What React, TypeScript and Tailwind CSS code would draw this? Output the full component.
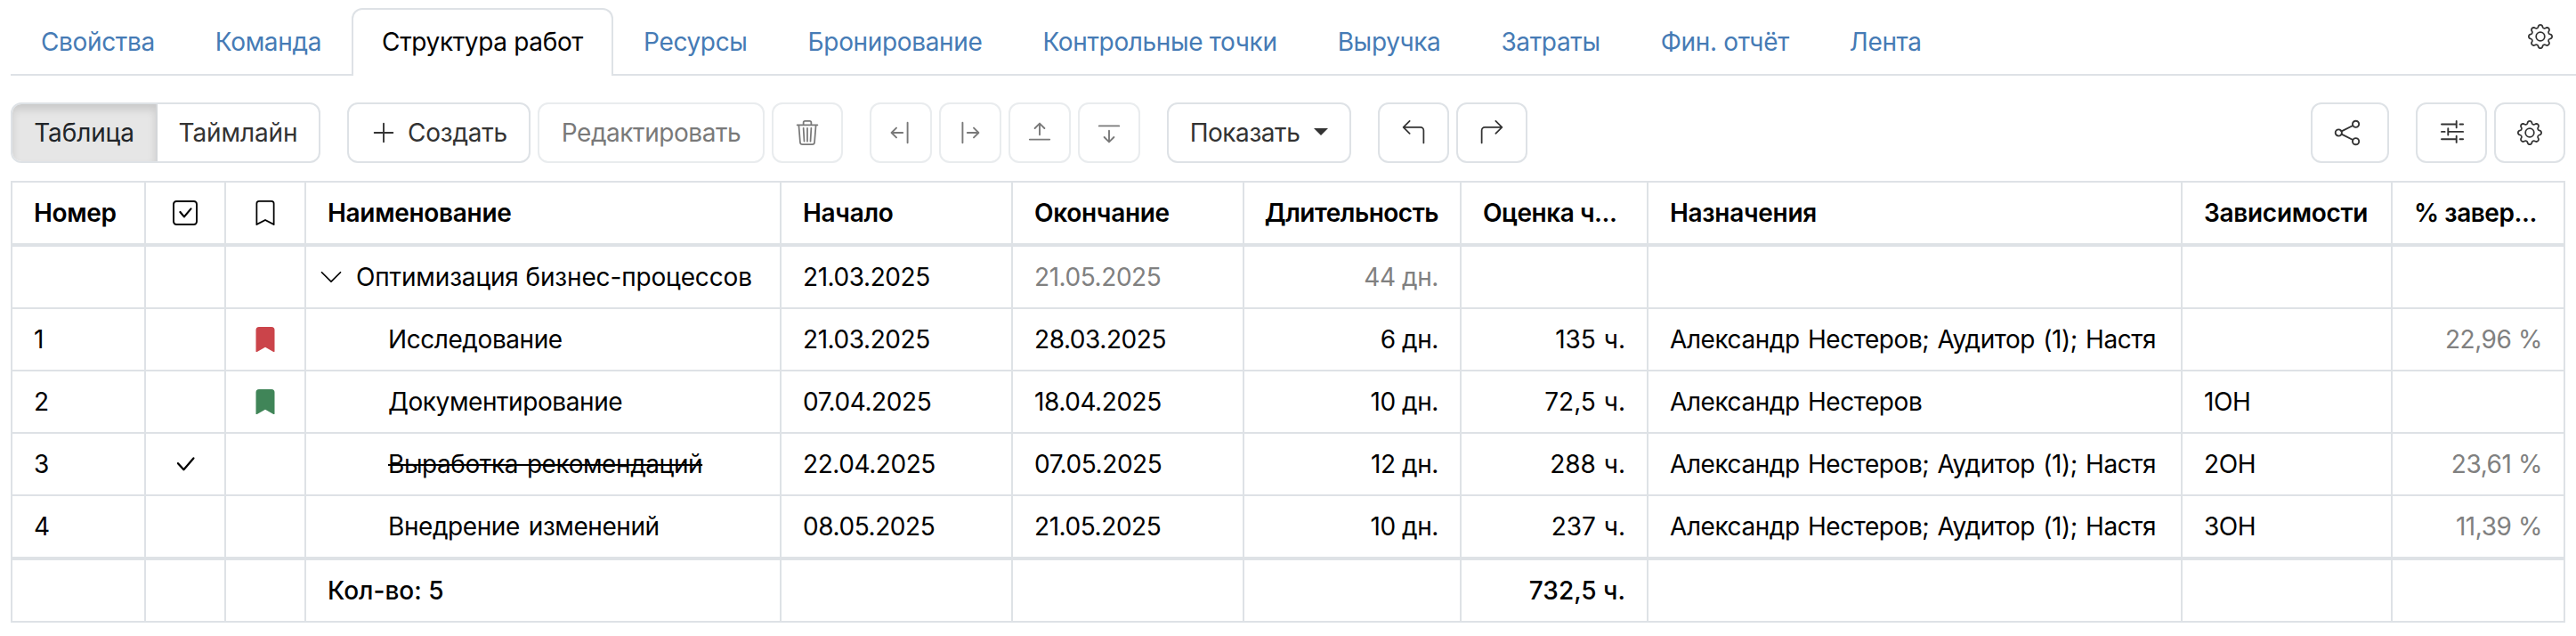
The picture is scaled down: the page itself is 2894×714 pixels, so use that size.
import type { ReactNode } from 'react'
import clsx from 'clsx'
import {
  BsArrow90DegLeft,
  BsArrow90DegRight,
  BsBookmark,
  BsBookmarkFill,
  BsChevronDown,
  BsGear,
  BsPlusLg,
  BsTrash3,
} from 'react-icons/bs'

const tabs = [
  'Свойства',
  'Команда',
  'Структура работ',
  'Ресурсы',
  'Бронирование',
  'Контрольные точки',
  'Выручка',
  'Затраты',
  'Фин. отчёт',
  'Лента',
]

interface Task {
  no: string
  done?: boolean
  flag?: string
  name: string
  start: string
  end: string
  duration: string
  hours: string
  people: string
  deps: string
  percent: string
}

const tasks: Task[] = [
  { no: '1', flag: 'text-[#cb444a]', name: 'Исследование', start: '21.03.2025', end: '28.03.2025', duration: '6 дн.', hours: '135 ч.', people: 'Александр Нестеров; Аудитор (1); Настя', deps: '', percent: '22,96 %' },
  { no: '2', flag: 'text-[#408558]', name: 'Документирование', start: '07.04.2025', end: '18.04.2025', duration: '10 дн.', hours: '72,5 ч.', people: 'Александр Нестеров', deps: '1ОН', percent: '' },
  { no: '3', done: true, name: 'Выработка рекомендаций', start: '22.04.2025', end: '07.05.2025', duration: '12 дн.', hours: '288 ч.', people: 'Александр Нестеров; Аудитор (1); Настя', deps: '2ОН', percent: '23,61 %' },
  { no: '4', name: 'Внедрение изменений', start: '08.05.2025', end: '21.05.2025', duration: '10 дн.', hours: '237 ч.', people: 'Александр Нестеров; Аудитор (1); Настя', deps: '3ОН', percent: '11,39 %' },
]

function Button({ children, className, disabled }: { children: ReactNode; className?: string; disabled?: boolean }) {
  return (
    <button
      disabled={disabled}
      className={clsx(
        'flex h-[68px] shrink-0 items-center justify-center rounded-xl border-2 border-[#dee2e6] bg-white text-[#333]',
        disabled && 'opacity-65',
        className
      )}
    >
      {children}
    </button>
  )
}

function Icon({ children, className }: { children: ReactNode; className?: string }) {
  return (
    <svg
      viewBox="0 0 28 28"
      className={clsx('size-7 overflow-visible', className)}
      fill="none"
      stroke="currentColor"
      strokeWidth="1.9"
      strokeLinecap="round"
      strokeLinejoin="round"
    >
      {children}
    </svg>
  )
}

function ShiftIcon({ className }: { className?: string }) {
  return (
    <Icon className={className}>
      <path d="M21.6 2.8v22.4M16.2 14H4M9 8.6 3.6 14 9 19.4" />
    </Icon>
  )
}

function Cell({ children, className }: { children?: ReactNode; className?: string }) {
  return (
    <div className={clsx('flex min-w-0 items-center border-r-2 border-[#dee2e6] px-6', className)}>
      {children && <span className="whitespace-nowrap">{children}</span>}
    </div>
  )
}

function Row({ children, className }: { children: ReactNode; className?: string }) {
  return (
    <div
      className={clsx(
        'grid grid-cols-[150px_90px_90px_534px_260px_260px_244px_210px_600px_236px_194px] border-[#dee2e6]',
        className
      )}
    >
      {children}
    </div>
  )
}

export default function App() {
  return (
    <div className="h-[714px] w-[2894px] bg-white pl-3 pt-[9px] font-['Inter',sans-serif] text-[28px] leading-[42px] font-[440] tracking-[-0.43px] text-black">
      <nav className="flex h-[76px] tracking-[-0.35px]">
        {tabs.map((tab) =>
          tab === 'Структура работ' ? (
            <a key={tab} className="rounded-t-xl border-2 border-b-0 border-[#dee2e6] px-8 pt-[15px]">
              {tab}
            </a>
          ) : (
            <a key={tab} className="border-b-2 border-[#dee2e6] px-[34px] pt-[17px] text-[#467bb5]">
              {tab}
            </a>
          )
        )}
        <div className="flex flex-1 justify-end border-b-2 border-[#dee2e6] pr-[26px] pt-[18px] text-[#333]">
          <BsGear className="size-7" />
        </div>
      </nav>

      <div className="mt-[30px] flex w-[2870px] items-center">
        <div className="flex h-[68px] overflow-hidden rounded-xl border-2 border-[#dee2e6] tracking-[-0.1px] text-[#333]">
          <button className="w-[163px] border-r-2 border-[#d4d6d8] bg-[#e6e6e6] text-[#212529] shadow-[inset_0_6px_10px_rgba(0,0,0,0.125)]">
            Таблица
          </button>
          <button className="w-[181px]">Таймлайн</button>
        </div>
        <Button className="ml-[30px] w-[206px] gap-3 tracking-[-0.2px]">
          <BsPlusLg className="size-[30px]" />
          Создать
        </Button>
        <Button className="ml-2 w-[255px]" disabled>
          Редактировать
        </Button>
        <Button className="ml-2 w-20" disabled>
          <BsTrash3 className="size-7" />
        </Button>
        <Button className="ml-[30px] w-[70px]" disabled>
          <ShiftIcon />
        </Button>
        <Button className="ml-2 w-[70px]" disabled>
          <ShiftIcon className="-translate-x-px rotate-180" />
        </Button>
        <Button className="ml-2 w-[70px]" disabled>
          <ShiftIcon className="rotate-90" />
        </Button>
        <Button className="ml-2 w-[70px]" disabled>
          <ShiftIcon className="-rotate-90" />
        </Button>
        <Button className="ml-[30px] w-[207px] gap-4">
          Показать
          <span className="mb-0.5 border-x-8 border-t-8 border-x-transparent border-t-[#333]" />
        </Button>
        <Button className="ml-[30px] w-20">
          <BsArrow90DegLeft className="size-7" />
        </Button>
        <Button className="ml-2 w-20">
          <BsArrow90DegRight className="size-7" />
        </Button>
        <Button className="ml-auto w-22">
          <Icon className="mr-[7px]">
            <circle cx="4.3" cy="14" r="3.6" />
            <circle cx="23.6" cy="4.3" r="3.6" />
            <circle cx="23.6" cy="23.7" r="3.6" />
            <path d="M7.6 12.4 20.3 6M7.6 15.6 20.3 22" />
          </Icon>
        </Button>
        <Button className="ml-[30px] w-20">
          <Icon>
            <path d="M3 4.5h16.7M23.5 4.5h3.6M19.7 1v7.2M3 12.9h3.6M10.3 12.9h16.8M10.3 9.3v7.2M3 21.3h16.7M23.5 21.3h3.6M19.7 17.7v7.2" />
          </Icon>
        </Button>
        <Button className="ml-2 w-20">
          <BsGear className="size-7" />
        </Button>
      </div>

      <div className="mt-5 w-[2870px] border-y-2 border-l-2 border-[#dee2e6]">
        <Row className="h-[72px] border-b-4 font-[570] tracking-[-0.3px]">
          <Cell>Номер</Cell>
          <Cell className="justify-center">
            <Icon>
              <rect x="1" y="1" width="26" height="26" rx="3.2" />
              <path d="m8.4 13 4.5 5.4 7.6-9" strokeWidth="2.2" />
            </Icon>
          </Cell>
          <Cell className="justify-center"><BsBookmark className="size-7" /></Cell>
          <Cell>Наименование</Cell>
          <Cell>Начало</Cell>
          <Cell>Окончание</Cell>
          <Cell className="justify-end tracking-[-0.5px]">Длительность</Cell>
          <Cell className="tracking-[-0.45px]">Оценка ч...</Cell>
          <Cell>Назначения</Cell>
          <Cell>Зависимости</Cell>
          <Cell className="tracking-[-0.45px]">% завер...</Cell>
        </Row>
        <Row className="h-[70px] border-b-2">
          <Cell />
          <Cell />
          <Cell />
          <div className="flex items-center border-r-2 border-[#dee2e6] pl-3.5 tracking-[-0.15px]">
            <BsChevronDown className="mr-3.5 size-7" />
            Оптимизация бизнес-процессов
          </div>
          <Cell>21.03.2025</Cell>
          <Cell className="text-[#808080]">21.05.2025</Cell>
          <Cell className="justify-end text-[#808080]">44 дн.</Cell>
          <Cell />
          <Cell />
          <Cell />
          <Cell />
        </Row>
        {tasks.map((t, i) => (
          <Row key={t.no} className={i === tasks.length - 1 ? 'h-[72px] border-b-4' : 'h-[70px] border-b-2'}>
            <Cell>{t.no}</Cell>
            <Cell className="justify-center">
              {t.done && (
                <Icon>
                  <path d="m6 13.2 6.4 7L23.4 7.4" strokeWidth="2.3" />
                </Icon>
              )}
            </Cell>
            <Cell className="justify-center">{t.flag && <BsBookmarkFill className={clsx('size-7', t.flag)} />}</Cell>
            <Cell className={clsx('pl-[92px] [word-spacing:2.5px]', t.done && 'line-through')}>{t.name}</Cell>
            <Cell>{t.start}</Cell>
            <Cell>{t.end}</Cell>
            <Cell className="justify-end">{t.duration}</Cell>
            <Cell className="justify-end tracking-normal [word-spacing:1px]">{t.hours}</Cell>
            <Cell className="[word-spacing:1.8px]">{t.people}</Cell>
            <Cell>{t.deps}</Cell>
            <Cell className="justify-end text-[#808080]">{t.percent}</Cell>
          </Row>
        ))}
        <Row className="h-[68px] font-[540] tracking-normal">
          <Cell />
          <Cell />
          <Cell />
          <Cell>Кол-во: 5</Cell>
          <Cell />
          <Cell />
          <Cell />
          <Cell className="justify-end">732,5 ч.</Cell>
          <Cell />
          <Cell />
          <Cell />
        </Row>
      </div>
    </div>
  )
}
